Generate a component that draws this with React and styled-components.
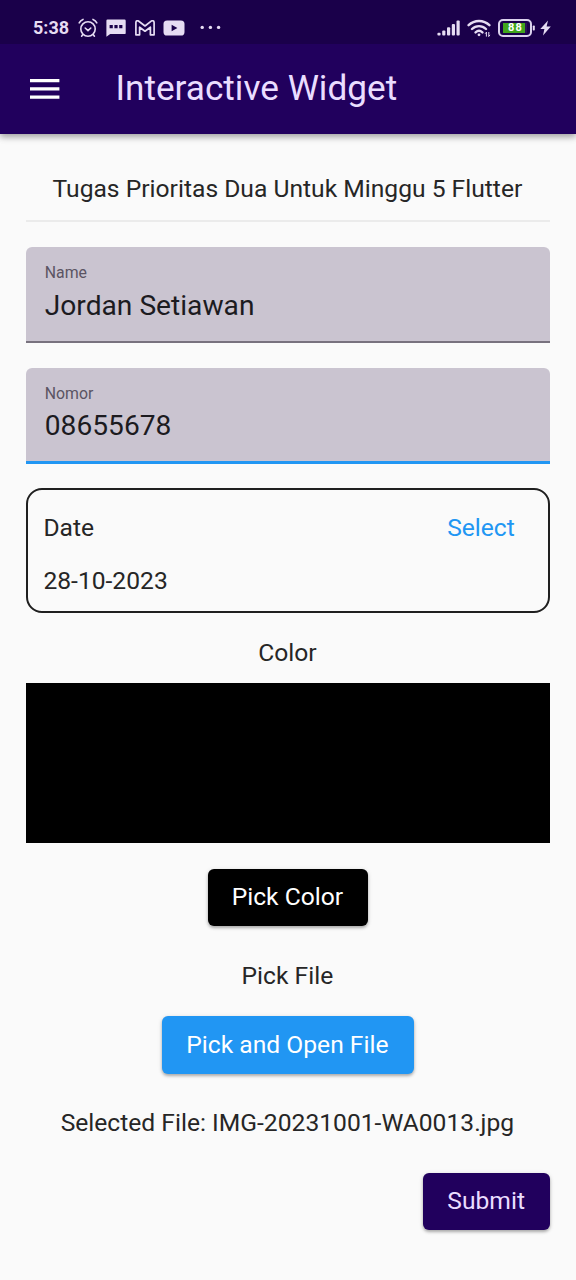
import React from "react";
import styled, { createGlobalStyle } from "styled-components";

const GlobalStyle = createGlobalStyle`
  *, *::before, *::after { box-sizing: border-box; }
  html, body { margin: 0; padding: 0; background: #fafafa; }
  body { font-family: Roboto, "Liberation Sans", sans-serif; color: #262626; }
  button { font: inherit; border: 0; margin: 0; padding: 0; background: none; }
`;

const Screen = styled.div`
  width: 576px;
  height: 1280px;
  display: flex;
  flex-direction: column;
  background: #fafafa;
  overflow: hidden;
`;

const Header = styled.header`
  flex: none;
  height: 133.5px;
  background: #21005d;
  box-shadow: 0 3px 6px rgba(0, 0, 0, 0.28), 0 1px 10px rgba(0, 0, 0, 0.14);
`;

const StatusBar = styled.div`
  height: 44px;
  padding: 12px 25px 0 33px;
  display: flex;
  justify-content: space-between;
  background: #1a004a;
  color: #e6dcf3;
`;

const StatusGroup = styled.div`
  height: 32px;
  display: flex;
  align-items: center;
`;

const Clock = styled.span`
  width: 45px;
  font-size: 18px;
  font-weight: 700;
  line-height: 32px;
`;

const Glyph = styled.svg`
  display: block;
  flex: none;
  margin-left: ${(p) => p.$gap || 0}px;
`;

const Battery = styled.div`
  width: 34px;
  height: 18px;
  margin-left: 7px;
  padding: 2px 3px;
  border: 2px solid #dcd2ee;
  border-radius: 5px;
  display: flex;
`;

const BatteryLevel = styled.span`
  flex: 1;
  background: linear-gradient(to right, #41a51c 90%, #2b1456 90%);
  color: #fff;
  font-size: 11px;
  font-weight: 700;
  line-height: 10px;
  letter-spacing: 1px;
  text-align: center;
`;

const Toolbar = styled.div`
  height: 89px;
  padding-left: 30px;
  display: flex;
  align-items: center;
`;

const MenuButton = styled.button`
  width: 85.4px;
  height: 40px;
  display: flex;
  align-items: center;
`;

const Title = styled.h1`
  margin: 0 0 2px;
  font-size: 35.2px;
  font-weight: 400;
  line-height: 42px;
  color: #eaddff;
`;

const Content = styled.main`
  flex: 1;
  padding: 37.5px 25.6px 0;
  display: flex;
  flex-direction: column;
  align-items: stretch;
`;

const Caption = styled.p`
  margin: ${(p) => p.$top || 0}px 0 0;
  padding-right: 1.2px;
  font-size: 24.64px;
  line-height: 36px;
  text-align: center;
  white-space: nowrap;
`;

const Divider = styled.hr`
  width: 100%;
  height: 2px;
  margin: 13px 0 0;
  border: 0;
  background: #ebebeb;
`;

const Field = styled.label`
  height: 96px;
  margin-top: ${(p) => p.$top}px;
  padding: 15px 19.2px 0;
  display: flex;
  flex-direction: column;
  background: #cac4d0;
  border-radius: 6px 6px 0 0;
  border-bottom: ${(p) => (p.$focused ? "3px solid #2196f3" : "2px solid #78727e")};
`;

const FieldLabel = styled.span`
  font-size: 15.84px;
  line-height: 22px;
  color: #5b5463;
`;

const FieldValue = styled.span`
  margin-top: ${(p) => p.$gap}px;
  font-size: 28.16px;
  line-height: 36px;
  color: #1c1b1f;
`;

const DateCard = styled.section`
  height: 125px;
  margin-top: 24px;
  padding: 20px 33.6px 0 15.8px;
  border: 2px solid #1f1f1f;
  border-radius: 16px;
`;

const DateHead = styled.div`
  display: flex;
  justify-content: space-between;
`;

const DateText = styled.div`
  margin-top: ${(p) => p.$top || 0}px;
  font-size: 24.64px;
  line-height: 36px;
`;

const SelectButton = styled.button`
  font-size: 24.64px;
  line-height: 36px;
  color: #2196f3;
`;

const Swatch = styled.div`
  height: 160px;
  margin-top: 12px;
  background: #000;
`;

const Raised = styled.button`
  width: ${(p) => p.$width}px;
  height: ${(p) => p.$height || 57}px;
  margin-top: ${(p) => p.$top}px;
  padding: 0 1.2px 1px 0;
  align-self: ${(p) => p.$align || "center"};
  border-radius: 6px;
  background: ${(p) => p.$bg};
  color: ${(p) => p.$fg || "#fff"};
  font-size: 24.64px;
  line-height: 36px;
  white-space: nowrap;
  box-shadow: 0 2px 3px rgba(0, 0, 0, 0.26), 0 1px 5px rgba(0, 0, 0, 0.12);
`;

function Alarm() {
  return (
    <Glyph width="20" height="20" viewBox="0 0 20 20" fill="none" stroke="currentColor" strokeWidth="1.6" strokeLinecap="round">
      <circle cx="10" cy="11" r="7.2" />
      <path d="M1.2 4.8C2 3.2 3.4 2 5 1.4M18.8 4.8C18 3.2 16.6 2 15 1.4M7.2 10L10 12.6L12.8 10M4.8 16.6L3.6 18.2M15.2 16.6L16.4 18.2" />
    </Glyph>
  );
}

function Chat() {
  return (
    <Glyph $gap={8} width="20" height="18" viewBox="0 0 20 18">
      <path fill="currentColor" d="M1.5 0.5h17a1.2 1.2 0 0 1 1.2 1.2v12.2a1.2 1.2 0 0 1-1.2 1.2H4.2L0.4 17.8V1.7A1.2 1.2 0 0 1 1.5 0.5z" />
      <path fill="#1a004a" d="M3.6 6h3.2v3.2H3.6zM8.4 6h3.2v3.2H8.4zM13.2 6h3.2v3.2h-3.2z" />
    </Glyph>
  );
}

function Mail() {
  return (
    <Glyph $gap={8.5} width="20" height="16" viewBox="0 0 20 16" fill="none" stroke="currentColor" strokeWidth="1.7" strokeLinejoin="round">
      <path d="M0.9 14.8V2.4C0.9 0.8 2.6 0.3 3.8 1.2L10 6L16.2 1.2C17.4 0.3 19.1 0.8 19.1 2.4V14.8H15.4V7.2L10 11.2L4.6 7.2V14.8z" />
    </Glyph>
  );
}

function Video() {
  return (
    <Glyph $gap={8} width="22" height="16" viewBox="0 0 22 16">
      <rect x="0.5" y="0.5" width="21" height="15" rx="3.6" fill="currentColor" />
      <path d="M8.6 4.8L14.4 8L8.6 11.2z" fill="#1a004a" />
    </Glyph>
  );
}

function More() {
  return (
    <Glyph $gap={15.5} width="22" height="6" viewBox="0 0 22 6" fill="currentColor">
      <circle cx="2.2" cy="2.4" r="1.7" />
      <circle cx="10.4" cy="2.4" r="1.7" />
      <circle cx="18.6" cy="2.4" r="1.7" />
    </Glyph>
  );
}

function Signal() {
  return (
    <Glyph width="23" height="16" viewBox="0 0 23 16" fill="currentColor">
      <rect x="0.4" y="12.8" width="3.2" height="2.8" rx="1" />
      <rect x="5.2" y="10.4" width="3.2" height="5.2" rx="1" />
      <rect x="10" y="7.2" width="3.2" height="8.4" rx="1" />
      <rect x="14.8" y="4" width="3.2" height="11.6" rx="1" />
      <rect x="19.5" y="0.4" width="3.2" height="15.2" rx="1" />
    </Glyph>
  );
}

function Wifi() {
  return (
    <Glyph $gap={7.4} width="24" height="18" viewBox="0 0 24 18" fill="none" stroke="currentColor" strokeWidth="2.4" strokeLinecap="round">
      <path d="M1.6 6.2C7.4 0.6 16.6 0.6 22.4 6.2M5 10C9 6.2 15 6.2 19 10M8.6 13.4C10.6 11.6 13.4 11.6 15.4 13.4" />
      <circle cx="12" cy="15.8" r="1.4" fill="currentColor" stroke="none" />
      <path strokeWidth="1" d="M19.4 13.4v3.8M18.4 14.4l1-1M21.8 13.4v3.8M22.8 16.2l-1 1" />
    </Glyph>
  );
}

function BatteryTip() {
  return (
    <Glyph width="3" height="6" viewBox="0 0 3 6">
      <rect x="0.8" y="0.4" width="2" height="5.2" rx="0.8" fill="currentColor" />
    </Glyph>
  );
}

function Bolt() {
  return (
    <Glyph $gap={4.6} width="11" height="16" viewBox="0 0 11 16">
      <path d="M8 0.6L0.3 9H4.4L3 15.6L10.8 6.6H6.6z" fill="currentColor" />
    </Glyph>
  );
}

export default function App() {
  return (
    <Screen>
      <GlobalStyle />
      <Header>
        <StatusBar>
          <StatusGroup>
            <Clock>5:38</Clock>
            <Alarm />
            <Chat />
            <Mail />
            <Video />
            <More />
          </StatusGroup>
          <StatusGroup>
            <Signal />
            <Wifi />
            <Battery>
              <BatteryLevel>88</BatteryLevel>
            </Battery>
            <BatteryTip />
            <Bolt />
          </StatusGroup>
        </StatusBar>
        <Toolbar>
          <MenuButton aria-label="Menu">
            <svg width="30" height="20" viewBox="0 0 30 20" fill="#fff">
              <path d="M0 0h29.4v3.3H0zM0 8.2h29.4v3.3H0zM0 16.4h29.4v3.3H0z" />
            </svg>
          </MenuButton>
          <Title>Interactive Widget</Title>
        </Toolbar>
      </Header>
      <Content>
        <Caption>Tugas Prioritas Dua Untuk Minggu 5 Flutter</Caption>
        <Divider />
        <Field $top={25}>
          <FieldLabel>Name</FieldLabel>
          <FieldValue $gap={4}>Jordan Setiawan</FieldValue>
        </Field>
        <Field $top={25} $focused>
          <FieldLabel>Nomor</FieldLabel>
          <FieldValue $gap={3}>08655678</FieldValue>
        </Field>
        <DateCard>
          <DateHead>
            <DateText>Date</DateText>
            <SelectButton>Select</SelectButton>
          </DateHead>
          <DateText $top={17}>28-10-2023</DateText>
        </DateCard>
        <Caption $top={22}>Color</Caption>
        <Swatch />
        <Raised $width={160.6} $top={26} $bg="#000">Pick Color</Raised>
        <Caption $top={32}>Pick File</Caption>
        <Raised $width={252} $height={58} $top={22} $bg="#2196f3">Pick and Open File</Raised>
        <Caption $top={31}>Selected File: IMG-20231001-WA0013.jpg</Caption>
        <Raised $width={127.4} $top={32} $align="flex-end" $bg="#21005d" $fg="#eaddff">Submit</Raised>
      </Content>
    </Screen>
  );
}
